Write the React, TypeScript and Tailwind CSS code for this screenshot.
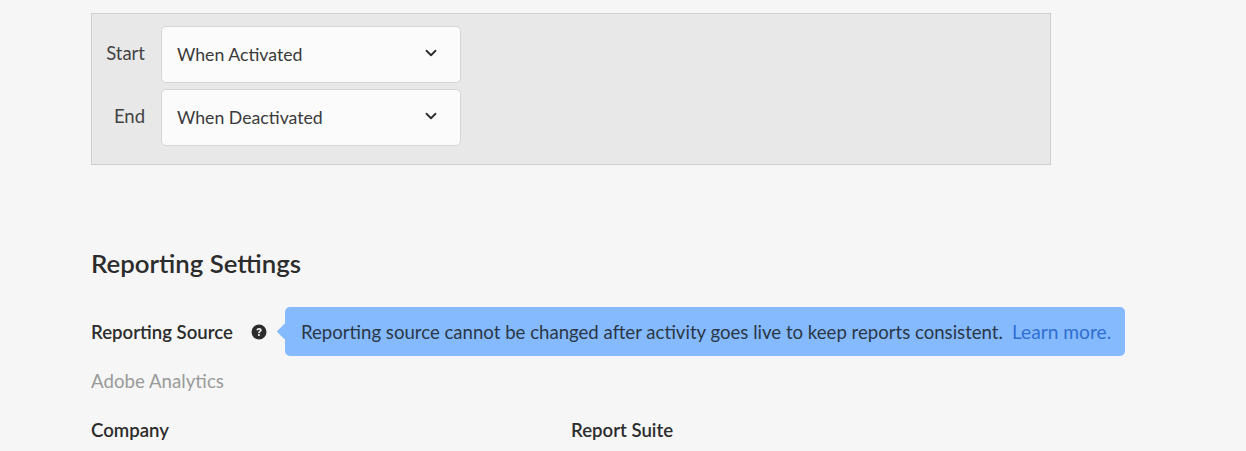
import React from "react";
import { ChevronDown } from "lucide-react";

const rows = [
  { label: "Start", value: "When Activated" },
  { label: "End", value: "When Deactivated" },
];

const App = () => {
  return (
    <div className="h-[451px] w-[1246px] overflow-hidden bg-[#f6f6f6] pl-[91px] pt-[13px] font-['Lato',sans-serif] text-[#2c2c2c]">
      <div className="flex h-[152px] w-[960px] flex-col gap-[6px] border border-[#cfcfcf] bg-[#e8e8e8] pt-3">
        {rows.map(row => (
          <div key={row.label} className="flex items-start">
            <div className="w-[53px] pt-[15px] text-right text-[18.500px] leading-6 text-[#444]">{row.label}</div>
            <div className="ml-4 flex h-[57px] w-[300px] items-center justify-between rounded-[5px] border border-[#d5d5d5] bg-[#fbfbfb] pl-[15px] pr-[20px] text-[17.700px] text-[#3a3a3a]">
              <span className="pt-0.5">{row.value}</span>
              <ChevronDown size={18} strokeWidth={2.4} className="mb-1 text-[#2c2c2c]" />
            </div>
          </div>
        ))}
      </div>

      <h2 className="mt-[82px] text-[25.800px] font-semibold leading-8">Reporting Settings</h2>

      <div className="mt-[28px] flex h-[49px] items-center">
        <span className="w-[160px] pt-0.5 text-[18.600px] font-semibold">Reporting Source</span>
        <svg viewBox="0 0 16 16" className="h-[16px] w-[16px] shrink-0 text-[#2c2c2c]" fill="currentColor">
          <circle cx="8" cy="8" r="7.5" />
          <path d="M5.4 6.2C5.5 4.8 6.6 4 8.1 4c1.5 0 2.6.9 2.6 2.1 0 1-.6 1.500-1.300 2-.5.3-.7.6-.7 1v.2H7.100v-.4c0-.8.4-1.300 1-1.700.5-.3.8-.6.8-1 0-.5-.3-.8-.8-.8s-.9.3-1 .9z" fill="#f6f6f6" />
          <rect x="7" y="10.100" width="1.800" height="1.800" rx=".4" fill="#f6f6f6" />
        </svg>
        <div className="relative ml-[18px] flex h-[49px] w-[840px] items-center rounded-[5px] bg-[#85baff] pl-4 pt-0.5 text-[18.600px] text-[#2b3746]">
          <span className="absolute -left-[6px] top-[19px] h-[11px] w-[11px] rotate-45 bg-[#85baff]" />
          <div className="flex items-baseline">
            <span>Reporting source cannot be changed after activity goes live to keep reports consistent.</span>
            <a className="ml-[9px] text-[19.200px] text-[#2f6fd0]">Learn more.</a>
          </div>
        </div>
      </div>

      <div className="mt-[13px] text-[18.700px] leading-6 text-[#9a9a9a]">Adobe Analytics</div>

      <div className="mt-[25px] flex text-[18.600px] font-semibold leading-6">
        <span className="w-[480px]">Company</span>
        <span>Report Suite</span>
      </div>
    </div>
  );
};

export default App;
